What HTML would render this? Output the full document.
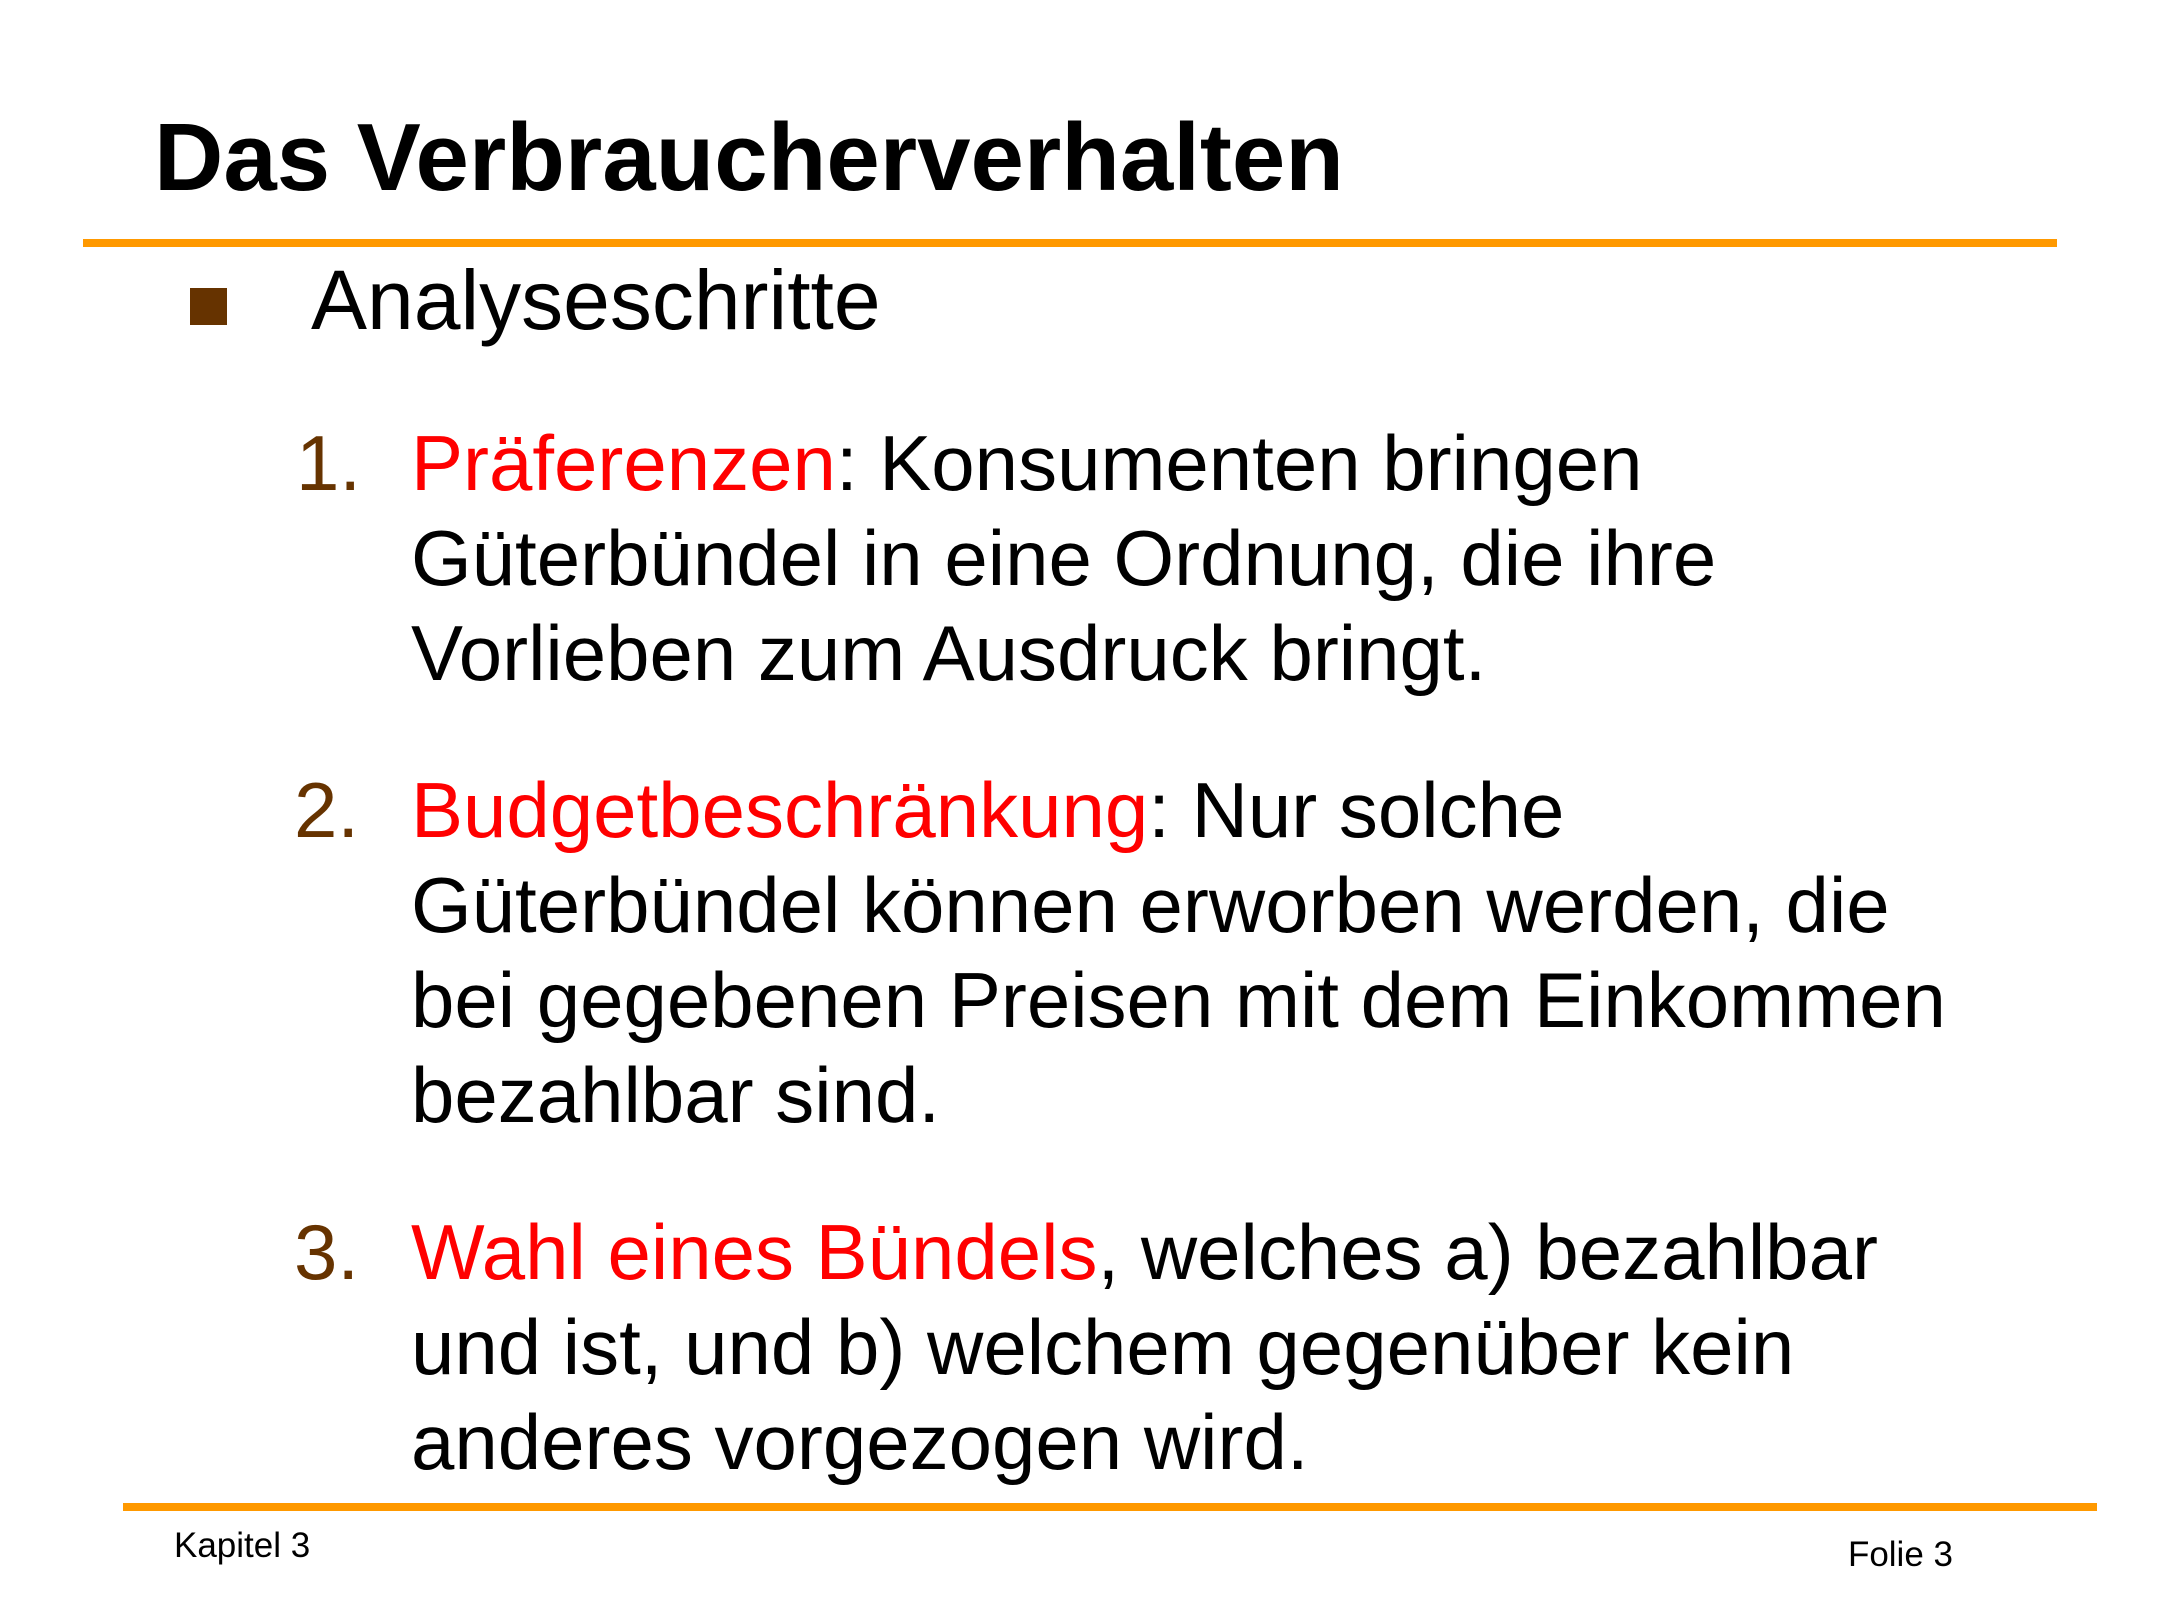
<!DOCTYPE html>
<html><head><meta charset="utf-8"><style>
body{margin:0;width:2160px;height:1620px;background:#fff;position:relative;overflow:hidden;font-family:"Liberation Sans",Arial,sans-serif;color:#000}
.a{position:absolute;white-space:nowrap}
.r{color:#ff0000}
.n{color:#663300}
.it{font-size:78px;line-height:95px}
</style></head><body>
<div class="a" style="left:154px;top:103px;font-size:96px;line-height:110px;font-weight:bold">Das Verbraucherverhalten</div>
<div class="a" style="left:83px;top:239px;width:1974px;height:8px;background:#ff9900"></div>
<div class="a" style="left:190px;top:288px;width:37px;height:37px;background:#663300"></div>
<div class="a" style="left:311px;top:250px;font-size:84px;line-height:100px">Analyseschritte</div>

<div class="a it n" style="left:296px;top:416px">1.</div>
<div class="a it" style="left:411px;top:416px"><span class="r">Präferenzen</span>: Konsumenten bringen<br>Güterbündel in eine Ordnung, die ihre<br>Vorlieben zum Ausdruck bringt.</div>

<div class="a it n" style="left:294px;top:763px">2.</div>
<div class="a it" style="left:411px;top:763px"><span class="r">Budgetbeschränkung</span>: Nur solche<br>Güterbündel können erworben werden, die<br>bei gegebenen Preisen mit dem Einkommen<br>bezahlbar sind.</div>

<div class="a it n" style="left:294px;top:1205px">3.</div>
<div class="a it" style="left:411px;top:1205px"><span class="r">Wahl eines Bündels</span>, welches a) bezahlbar<br>und ist, und b) welchem gegenüber kein<br>anderes vorgezogen wird.</div>

<div class="a" style="left:123px;top:1503px;width:1984px;height:8px;background:#ff9900;width:1974px"></div>
<div class="a" style="left:174px;top:1526px;font-size:35px;line-height:40px">Kapitel 3</div>
<div class="a" style="right:199px;top:1535px;font-size:35px;line-height:40px;right:207px">Folie 3</div>
</body></html>
